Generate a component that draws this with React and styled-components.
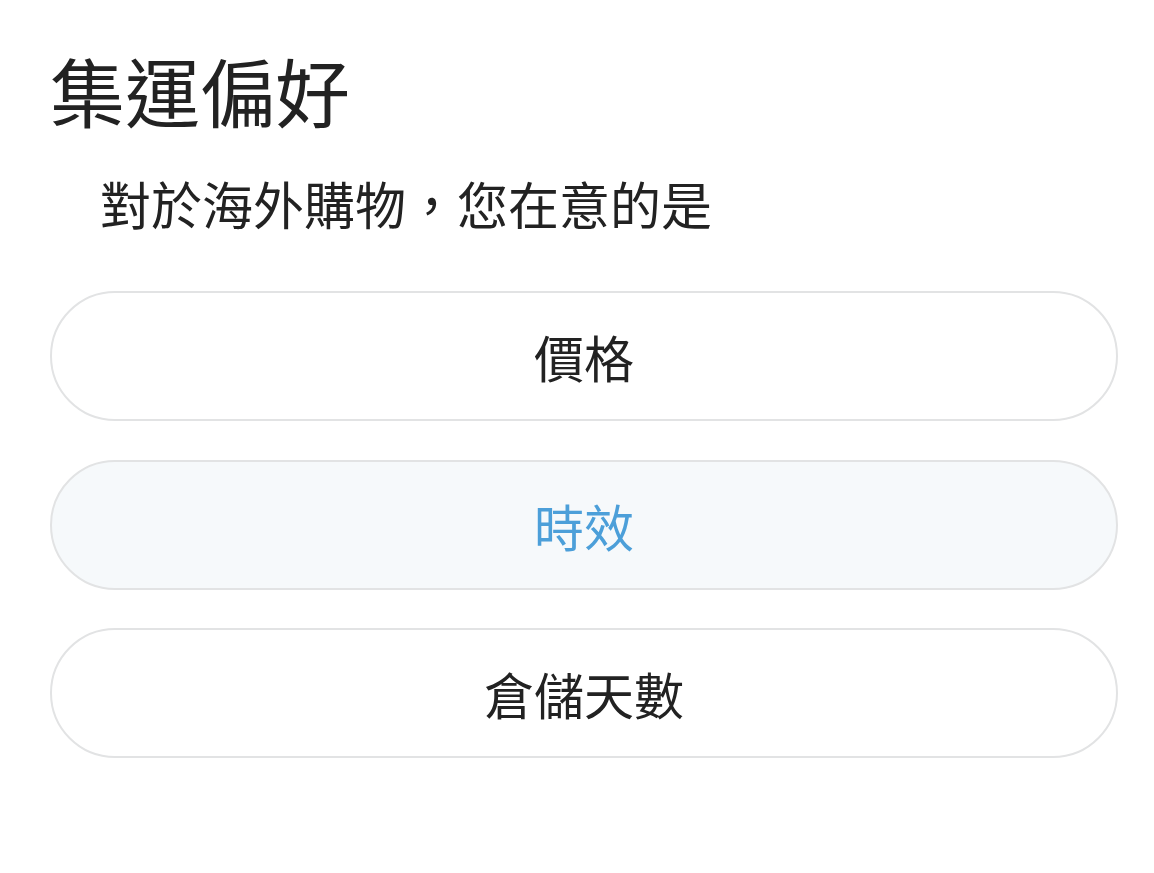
import React, { useState } from "react";
import styled, { createGlobalStyle } from "styled-components";

const GlobalStyle = createGlobalStyle`
  html, body {
    margin: 0;
    padding: 0;
    background: #ffffff;
  }
  body {
    font-family: "Noto Sans CJK TC", "Noto Sans", sans-serif;
    color: #222222;
  }
`;

const Page = styled.div`
  display: flex;
  flex-direction: column;
  padding: 46px 36px 0 50px;
`;

const Title = styled.h1`
  margin: 0;
  font-size: 75px;
  font-weight: 400;
  line-height: 88px;
  color: #222222;
`;

const Question = styled.p`
  margin: 39px 0 0 50px;
  font-size: 51px;
  line-height: 60px;
  color: #222222;
`;

const Options = styled.div`
  display: flex;
  flex-direction: column;
  gap: 38.5px;
  margin-top: 58px;
`;

const Option = styled.button`
  display: flex;
  align-items: center;
  justify-content: center;
  height: 130px;
  width: 100%;
  box-sizing: border-box;
  border: 2.5px solid #e2e3e4;
  border-radius: 65px;
  background: ${(p) => (p.$active ? "#f6f9fb" : "#ffffff")};
  color: ${(p) => (p.$active ? "#4c9fd9" : "#222222")};
  font-family: "Noto Sans CJK TC", "Noto Sans", sans-serif;
  font-size: 50px;
  line-height: 1;
  padding: 0;
  cursor: pointer;
`;

const options = ["價格", "時效", "倉儲天數"];

export default function App() {
  const [selected, setSelected] = useState(1);
  return (
    <>
      <GlobalStyle />
      <Page>
        <Title>集運偏好</Title>
        <Question>對於海外購物，您在意的是</Question>
        <Options>
          {options.map((o, i) => (
            <Option key={o} $active={selected === i} onClick={() => setSelected(i)}>
              {o}
            </Option>
          ))}
        </Options>
      </Page>
    </>
  );
}
